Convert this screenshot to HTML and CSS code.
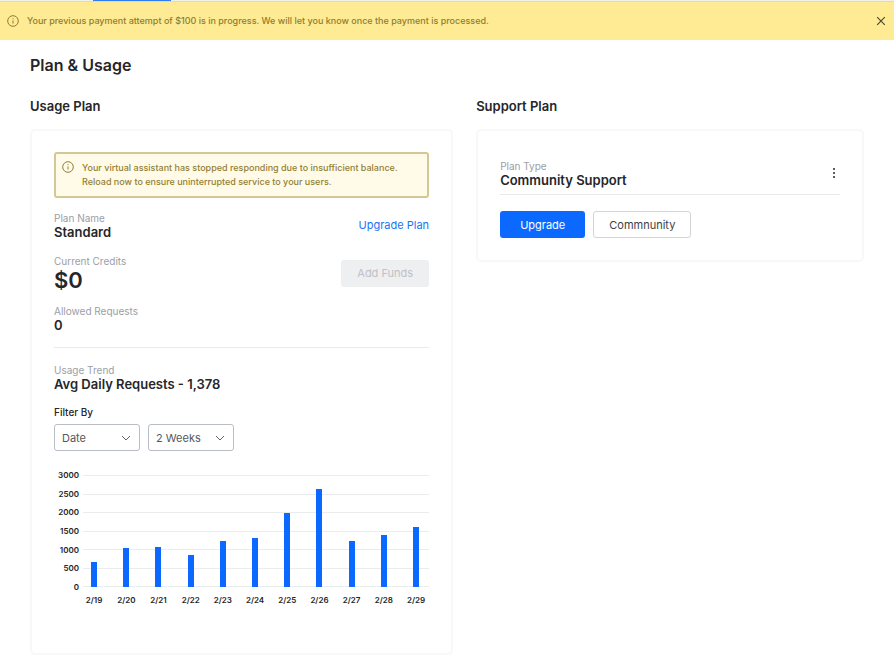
FILE: index.html
```html
<!DOCTYPE html>
<html lang="en">
<head>
<meta charset="utf-8">
<title>Plan &amp; Usage</title>
<link rel="stylesheet" href="styles.css">
</head>
<body>
<div class="tab-strip"><span class="tab-active"></span></div>
<div class="banner" role="status">
  <svg class="icon-info" viewBox="0 0 12 12" aria-hidden="true"><circle cx="6" cy="6" r="5.3"/><path d="M6 5.4v3.2M6 3.2v1"/></svg>
  <p class="banner-text">Your previous payment attempt of $100 is in progress. We will let you know once the payment is processed.</p>
  <button class="icon-button" type="button" aria-label="Dismiss">
    <svg class="icon-close" viewBox="0 0 10 10" aria-hidden="true"><path d="M1.2 1.2l7.6 7.6M8.8 1.2L1.2 8.8"/></svg>
  </button>
</div>

<main class="page">
  <h1 class="page-title">Plan &amp; Usage</h1>
  <div class="columns">
    <section>
      <h2 class="section-title">Usage Plan</h2>
      <div class="card usage-card">
        <div class="alert" role="alert">
          <svg class="icon-info" viewBox="0 0 12 12" aria-hidden="true"><circle cx="6" cy="6" r="5.3"/><path d="M6 5.4v3.2M6 3.2v1"/></svg>
          <p class="alert-text">Your virtual assistant has stopped responding due to insufficient balance.<br>Reload now to ensure uninterrupted service to your users.</p>
        </div>
        <div class="row">
          <div><div class="label">Plan Name</div><div class="value">Standard</div></div>
          <a class="link" href="#">Upgrade Plan</a>
        </div>
        <div class="row row-credits">
          <div><div class="label">Current Credits</div><div class="value-large">$0</div></div>
          <button class="button button-disabled" type="button" disabled>Add Funds</button>
        </div>
        <div class="row row-last">
          <div><div class="label">Allowed Requests</div><div class="value">0</div></div>
        </div>
        <div class="trend">
          <div class="label">Usage Trend</div>
          <div class="value">Avg Daily Requests - 1,378</div>
        </div>
        <label class="filter-label" for="filter-field">Filter By</label>
        <div class="filters">
          <div class="select-wrap">
            <select class="select" id="filter-field"><option>Date</option></select>
            <svg class="icon-chevron" viewBox="0 0 10 6" aria-hidden="true"><path d="M1 1l4 4 4-4"/></svg>
          </div>
          <div class="select-wrap">
            <select class="select" aria-label="Period"><option>2 Weeks</option></select>
            <svg class="icon-chevron" viewBox="0 0 10 6" aria-hidden="true"><path d="M1 1l4 4 4-4"/></svg>
          </div>
        </div>
        <div class="chart">
          <div class="y-axis"><span>3000</span><span>2500</span><span>2000</span><span>1500</span><span>1000</span><span>500</span><span>0</span></div>
          <div class="plot">
            <div class="grid-lines"><i></i><i></i><i></i><i></i><i></i><i></i><i></i></div>
            <div class="bars">
              <span class="bar" style="height:22.3%"></span>
              <span class="bar" style="height:34.7%"></span>
              <span class="bar" style="height:35.3%"></span>
              <span class="bar" style="height:28.7%"></span>
              <span class="bar" style="height:41.5%"></span>
              <span class="bar" style="height:43.5%"></span>
              <span class="bar" style="height:66%"></span>
              <span class="bar" style="height:87.7%"></span>
              <span class="bar" style="height:41.2%"></span>
              <span class="bar" style="height:46.2%"></span>
              <span class="bar" style="height:54%"></span>
            </div>
          </div>
          <div class="x-axis"><span>2/19</span><span>2/20</span><span>2/21</span><span>2/22</span><span>2/23</span><span>2/24</span><span>2/25</span><span>2/26</span><span>2/27</span><span>2/28</span><span>2/29</span></div>
        </div>
      </div>
    </section>

    <section>
      <h2 class="section-title">Support Plan</h2>
      <div class="card support-card">
        <div class="support-head">
          <div><div class="label">Plan Type</div><div class="value">Community Support</div></div>
          <button class="icon-button" type="button" aria-label="More options">
            <svg class="icon-more" viewBox="0 0 12 12" aria-hidden="true"><path d="M5 1h2v2H5zM5 5h2v2H5zM5 9h2v2H5z"/></svg>
          </button>
        </div>
        <div class="actions">
          <button class="button button-primary" type="button">Upgrade</button>
          <button class="button button-outline" type="button">Commnunity</button>
        </div>
      </div>
    </section>
  </div>
</main>
</body>
</html>
```
FILE: styles.css
```css
* { box-sizing: border-box; }

body {
  margin: 0;
  background: #fff;
  color: #24262b;
  font-family: Inter, "Liberation Sans", sans-serif;
  font-size: 11px;
  line-height: 14px;
}

h1, h2, p { margin: 0; }
button, select { font: inherit; }
svg { display: block; fill: none; flex: none; }

.tab-strip { display: flex; height: 1px; background: #f1f0ea; }
.tab-active { width: 78px; margin-left: 93px; background: #2f7df0; }

.banner {
  display: flex;
  align-items: center;
  gap: 8px;
  height: 39px;
  padding: 0 8px 0 7px;
  border-top: 1px solid #ecdc8c;
  background: #feeb94;
  color: #8f7d30;
}
.banner-text { flex: 1; font-size: 9px; font-weight: 500; }

.icon-button { padding: 0; border: 0; background: none; color: #4f4a33; }
.icon-info { width: 12px; height: 12px; stroke: currentColor; }
.icon-close { width: 10px; height: 10px; stroke: currentColor; stroke-width: 1.2; }
.icon-more { width: 12px; height: 12px; fill: #5a5c60; }

.page { padding: 13px 30px 2px; }
.page-title { font-size: 16px; font-weight: 600; line-height: 24px; }
.columns {
  display: grid;
  grid-template-columns: 12fr 11fr;
  gap: 23px;
  align-items: start;
  margin-top: 21px;
}
.section-title { font-size: 13px; font-weight: 600; line-height: 16px; }

.card {
  margin-top: 15px;
  border: 2px solid #f8f8f9;
  border-radius: 5px;
}
.usage-card { padding: 21px 22px 47px; }
.support-card { padding: 28px 22px 22px; }

.alert {
  display: flex;
  gap: 8px;
  margin-bottom: 13px;
  padding: 7px 6px 6px;
  border: 2px solid #d3c795;
  border-radius: 3px;
  background: #fffbe8;
  color: #927f35;
}
.alert-text { padding-bottom: 1px; font-size: 9px; font-weight: 500; }

.label { color: #9b9ea6; font-size: 10px; }
.value { font-size: 13px; font-weight: 600; }
.value-large { font-size: 22px; font-weight: 600; line-height: 24px; }

.row {
  display: flex;
  align-items: center;
  justify-content: space-between;
  margin-bottom: 15px;
}
.row-credits { margin-bottom: 12px; }
.row-last { padding-bottom: 15px; border-bottom: 1px solid #e9eaec; }
.link { color: #1a73f8; font-size: 11px; text-decoration: none; }

.button {
  height: 27px;
  padding: 0 15px;
  border: 1px solid transparent;
  border-radius: 3px;
  font-size: 11px;
}
.button-disabled { background: #eeeff1; color: #bfc1c5; }
.button-primary { padding: 0 19px; background: #0b69ff; color: #fff; }
.button-outline { border-color: #d2d4d8; background: #fff; color: #3c3f44; }

.trend { margin-bottom: 14px; }
.filter-label { display: block; font-size: 10px; font-weight: 500; }
.filters { display: flex; gap: 8px; margin-top: 5px; }
.select-wrap { position: relative; width: 86px; }
.select {
  width: 100%;
  height: 27px;
  padding: 0 7px;
  border: 1px solid #b9bdc4;
  border-radius: 3px;
  appearance: none;
  background: #fff;
  color: #55585e;
}
.icon-chevron {
  position: absolute;
  top: 11px;
  right: 9px;
  width: 10px;
  height: 6px;
  stroke: #60636a;
  pointer-events: none;
}

.chart {
  display: grid;
  grid-template-columns: 25px 1fr;
  column-gap: 4px;
  margin-top: 18px;
  font-size: 8px;
  font-weight: 600;
  line-height: 12px;
}
.y-axis {
  display: flex;
  flex-direction: column;
  justify-content: space-between;
  height: 124px;
  text-align: right;
}
.plot { position: relative; margin: 6px 0; }
.grid-lines {
  position: absolute;
  inset: 0;
  display: flex;
  flex-direction: column;
  justify-content: space-between;
}
.grid-lines i { height: 1px; background: #ebecee; }
.bars, .x-axis {
  display: grid;
  grid-template-columns: repeat(11, 1fr);
  margin: 0 -3px 0 -5px;
}
.bars { position: relative; height: 100%; align-items: end; justify-items: center; }
.bar { width: 6px; background: #0b69ff; }
.x-axis { grid-column: 2; margin-top: 1px; text-align: center; }

.support-head {
  display: flex;
  align-items: center;
  justify-content: space-between;
  padding-bottom: 7px;
  border-bottom: 1px solid #e9eaec;
}
.actions { display: flex; gap: 8px; margin-top: 16px; }
```
